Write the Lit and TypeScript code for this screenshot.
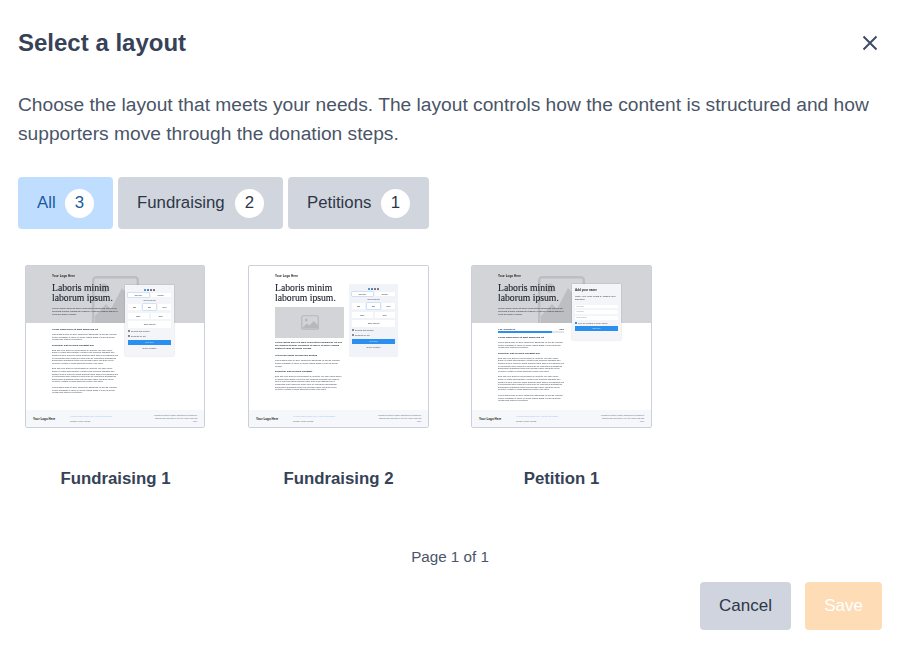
import { LitElement, html, css, nothing } from "lit";
import { customElement, property } from "lit/decorators.js";

const L1 = "Lorem ipsum dolor sit amet consectetur adipiscing elit sed do eiusmod tempor incididunt ut labore et dolore magna aliqua ut enim ad minim veniam quis nostrud exercitation.";
const L2 = "Duis aute irure dolor in reprehenderit in voluptate velit esse cillum dolore eu fugiat nulla pariatur excepteur sint occaecat cupidatat non proident sunt in culpa qui officia deserunt mollit anim id est laborum sed ut perspiciatis unde omnis iste natus error sit voluptatem accusantium doloremque laudantium totam rem aperiam eaque ipsa quae ab illo inventore veritatis et quasi architecto beatae vitae dicta.";
const S1 = "Lorem ipsum dolor sit amet consectetur adipiscing elit sed do eiusmod tempor incididunt ut labore et dolore magna aliqua ut enim ad minim veniam.";

@customElement("layout-thumb")
class LayoutThumb extends LitElement {
  @property() kind = "f1";
  static styles = css`
    :host { display: block; width: 181px; height: 163px; }
    .frame { position: relative; box-sizing: border-box; width: 181px; height: 163px; border: 1px solid #cbd0da; border-radius: 2px; overflow: hidden; background: #fff; font-family: "Liberation Sans", sans-serif; color: #2d3748; }
    .frame.f1 { width: 180px; }
    .inner { height: 100%; display: flex; flex-direction: column; filter: blur(.22px); }
    .hero { background: #d2d4d7; box-sizing: border-box; height: 57px; padding: 8px 0 0 26px; flex: none; position: relative; overflow: hidden; }
    .plain { padding: 8px 0 0 26px; flex: none; }
    .bgicon { position: absolute; left: 66px; top: 10px; width: 47px; height: 47px; }
    .logo { position: relative; font: 700 3.1px/4px "Liberation Sans", sans-serif; color: #222; }
    h3 { position: relative; margin: 5px 0 3px; font: 400 9.7px/10.4px "Liberation Serif", serif; color: #1a202c; width: 68px; -webkit-text-stroke: .12px #1a202c; }
    .sub { position: relative; width: 66px; font-size: 2.4px; line-height: 3.2px; color: #1f2733; margin: 0; }
    .photo { width: 69px; height: 31px; background: #d2d4d7; margin: 2px 0 3px; display: flex; align-items: center; justify-content: center; }
    .photo svg { width: 18px; height: 15px; }
    .main { flex: 1; box-sizing: border-box; padding: 5px 0 0 26px; width: 92px; overflow: hidden; }
    .main.tight { padding-top: 4px; width: 94px; }
    .main h4 { margin: 0 0 2px; font-size: 2.3px; line-height: 3px; color: #1a202c; font-weight: 700; }
    .main p { margin: 0 0 3px; font-size: 2.1px; line-height: 2.6px; color: #2f3744; }
    .progress { display: flex; justify-content: space-between; font-size: 2.2px; font-weight: 700; color: #333; line-height: 3px; }
    .bar { height: 2px; background: #e2e5ea; margin-bottom: 3px; }
    .bar i { display: block; height: 100%; width: 82%; background: #2a8fee; }
    .footer { flex: none; height: 17px; background: #f5f7fa; box-sizing: border-box; padding: 0 7px; display: flex; align-items: center; gap: 7px; }
    .flogo { font-size: 3px; font-weight: 700; color: #222; width: 30px; flex: none; white-space: nowrap; }
    .fmid { flex: 1; font-size: 2.2px; line-height: 5px; color: #555; white-space: nowrap; min-width: 0; }
    .fmid b { display: block; font-weight: 400; color: #8fc3f2; }
    .fright { font-size: 1.9px; line-height: 2.7px; color: #667; text-align: right; width: 43px; flex: none; }
    .form { position: absolute; left: 99px; top: 19px; width: 49px; height: 71px; background: #f3f5f9; box-sizing: border-box; padding: 3px; display: flex; flex-direction: column; gap: 2.4px; box-shadow: 0 0 1.5px rgba(0,0,0,.22); font-size: 1.9px; color: #444; text-align: center; }
    .form.f2 { left: 100px; top: 18px; height: 73px; background: #f0f3f8; box-shadow: none; }
    .form.p1 { top: 18px; left: 100px; height: 56px; text-align: left; gap: 2px; }
    .steps { display: flex; justify-content: center; gap: 1.2px; margin-top: 1px; }
    .steps i { width: 1.7px; height: 1.7px; border-radius: 50%; background: #667; }
    .steps i:first-child { background: #2a8fee; }
    .row { display: flex; gap: 2px; }
    .cell { flex: 1; background: #fff; height: 6.4px; line-height: 6.4px; text-align: center; color: #333; white-space: nowrap; }
    .cell.on { box-shadow: 0 0 0 .4px #9cc9f2; }
    .tabcell { height: 4px; line-height: 4px; }
    .check { display: flex; align-items: center; gap: 1px; text-align: left; height: 2.4px; white-space: nowrap; }
    .check i { width: 2px; height: 2px; border: .3px solid #889; box-sizing: border-box; background: #fff; flex: none; }
    .check.blue i { background: #2a8fee; border-color: #2a8fee; }
    .go { background: #2a8fee; height: 5px; line-height: 5px; color: #cfe6ff; text-align: center; }
    .form-title { font-size: 3px; font-weight: 700; color: #222; line-height: 4px; margin-top: 1px; }
    .form-text { font-size: 2.4px; line-height: 3.3px; color: #333; margin: 1px 0 1px; }
    .input { background: #fff; height: 3.8px; line-height: 3.8px; padding-left: 1.5px; color: #99a; font-size: 1.6px; }
  `;

  private icon(color: string) {
    return html`<svg viewBox="0 0 24 20" fill="none"><rect x="1" y="1" width="22" height="18" rx="1.5" stroke="${color}" stroke-width="1.6"></rect><circle cx="7" cy="6.5" r="2" fill="${color}"></circle><path d="M2 17l6-6 3 3 6-6 6 6v4H2z" fill="${color}"></path></svg>`;
  }

  private donate() {
    return html`
      <div class="steps"><i></i><i></i><i></i><i></i></div>
      <div class="row"><div class="cell tabcell on">One time</div><div class="cell tabcell">Monthly</div></div>
      <div>Select amount</div>
      <div class="row"><div class="cell">$25</div><div class="cell on">$50</div><div class="cell">$100</div></div>
      <div class="row"><div class="cell">$250</div><div class="cell">$500</div></div>
      <div class="row"><div class="cell">Other amount</div></div>
      <div class="check"><i></i>Dedicate this donation</div>
      <div class="check"><i></i>Designate my gift</div>
      <div class="go">Next step</div>
      <div>Secure donation</div>
    `;
  }

  private petition() {
    return html`
      <div class="form-title">Add your name</div>
      <div class="form-text">Make your voice heard by adding your signature.</div>
      <div class="input">First name</div>
      <div class="input">Last name</div>
      <div class="input">Email address</div>
      <div class="check blue"><i></i>Keep me updated on future actions</div>
      <div class="go">Sign now</div>
    `;
  }

  private bodyText() {
    return html`
      <h4>Lorem ipsum dolor sit amet adipiscing elit</h4>
      <p>${L1}</p>
      <h4>Excepteur sint occaecat cupidatat non</h4>
      <p>${L2}</p>
      <p>${L2}</p>
      <p>${L1}</p>
    `;
  }

  render() {
    const k = this.kind;
    const footer = html`<div class="footer">
      <div class="flogo">Your Logo Here</div>
      <div class="fmid"><b>Helping others since the year two thousand</b>Privacy Policy Terms</div>
      <div class="fright">Registered charity number 1234567890 Registered address 123 Main Street Your City Phone 555 123 4567</div>
    </div>`;
    if (k === "f2") {
      return html`<div class="frame"><div class="inner">
        <div class="plain">
          <div class="logo">Your Logo Here</div>
          <h3>Laboris minim laborum ipsum.</h3>
          <div class="photo">${this.icon("#b6b8bb")}</div>
          <p class="sub" style="width:68px;font-weight:700">${S1}</p>
        </div>
        <div class="main tight">
          <h4>Ut enim ad minim veniam quis nostrud</h4>
          <p>${S1}</p>
          <h4>Excepteur sint occaecat cupidatat</h4>
          <p>${L2}</p>
        </div>
        ${footer}
        <div class="form f2">${this.donate()}</div>
      </div></div>`;
    }
    return html`<div class="frame ${k}"><div class="inner">
      <div class="hero">
        <svg class="bgicon" viewBox="0 0 47 47" fill="none"><rect x="1.2" y="1.2" width="44.6" height="56" rx="3" stroke="#bcbec1" stroke-width="2.4"></rect><circle cx="12" cy="12" r="4.5" fill="#bcbec1"></circle><path d="M3 47V40L14 28l5 5L30 12 45 30V47z" fill="#bcbec1"></path></svg>
        <div class="logo">Your Logo Here</div>
        <h3>Laboris minim laborum ipsum.</h3>
        <p class="sub">${S1}</p>
      </div>
      <div class="main">
        ${k === "p1" ? html`<div class="progress"><span>1,234 signatures</span><span>Goal</span></div><div class="bar"><i></i></div>` : nothing}
        ${this.bodyText()}
      </div>
      ${footer}
      ${k === "p1" ? html`<div class="form p1">${this.petition()}</div>` : html`<div class="form">${this.donate()}</div>`}
    </div></div>`;
  }
}

@customElement("app-root")
export class AppRoot extends LitElement {
  static styles = css`
    :host { display: block; width: 910px; height: 649px; background: #fff; font-family: "Liberation Sans", Arial, sans-serif; color: #2d3748; }
    .dialog { box-sizing: border-box; height: 649px; padding: 29px 28px 19px 18px; display: flex; flex-direction: column; }
    .head { display: flex; justify-content: space-between; align-items: center; height: 28px; }
    h2 { margin: 0; font-size: 24px; line-height: 28px; font-weight: 700; color: #364257; }
    .close { width: 20px; height: 20px; margin-right: 2px; color: #3f4c63; }
    .close svg { display: block; width: 20px; height: 20px; }
    .desc { margin: 33px 0 0; font-size: 19.2px; line-height: 29px; color: #4a5568; width: 864px; }
    .tabs { display: flex; gap: 5px; margin-top: 29px; }
    .tab { height: 52px; box-sizing: border-box; display: flex; align-items: center; justify-content: space-between; padding: 0 19px; background: #d1d5dd; border-radius: 4px; font-size: 16.8px; color: #2d3748; }
    .tab.on { background: #bfdeff; color: #1a5aa0; }
    .badge { width: 29px; height: 29px; border-radius: 50%; background: #fff; display: flex; align-items: center; justify-content: center; }
    .grid { display: flex; gap: 42px; margin: 36px 0 0 7px; }
    .card { width: 181px; display: flex; flex-direction: column; align-items: center; gap: 41px; }
    .name { font-size: 16.8px; line-height: 20px; font-weight: 700; color: #364257; white-space: nowrap; }
    .pager { margin-top: 59px; text-align: center; font-size: 15.2px; line-height: 18px; color: #4a5568; width: 864px; }
    .actions { display: flex; justify-content: flex-end; gap: 14px; margin-top: 16px; }
    .btn { height: 48px; border-radius: 4px; display: flex; align-items: center; justify-content: center; font-size: 17px; }
    .cancel { width: 91px; background: #cfd4de; color: #2d3748; }
    .save { width: 77px; background: #fedcb6; color: #fff; }
  `;
  render() {
    const tabs = [["All", 3, true, 95], ["Fundraising", 2, false, 165], ["Petitions", 1, false, 141]] as const;
    const cards = [["f1", "Fundraising 1"], ["f2", "Fundraising 2"], ["p1", "Petition 1"]];
    return html`<div class="dialog">
      <div class="head">
        <h2>Select a layout</h2>
        <div class="close"><svg viewBox="0 0 20 20" fill="none" stroke="currentColor" stroke-width="2"><path d="M3.5 3.5l13 13M16.5 3.5l-13 13"></path></svg></div>
      </div>
      <p class="desc">Choose the layout that meets your needs. The layout controls how the content is structured and how supporters move through the donation steps.</p>
      <div class="tabs">
        ${tabs.map(([t, n, on, w]) => html`<div class="tab ${on ? "on" : ""}" style="width:${w}px">${t}<span class="badge">${n}</span></div>`)}
      </div>
      <div class="grid">
        ${cards.map(([k, n]) => html`<div class="card"><layout-thumb kind=${k}></layout-thumb><div class="name">${n}</div></div>`)}
      </div>
      <div class="pager">Page 1 of 1</div>
      <div class="actions"><div class="btn cancel">Cancel</div><div class="btn save">Save</div></div>
    </div>`;
  }
}
